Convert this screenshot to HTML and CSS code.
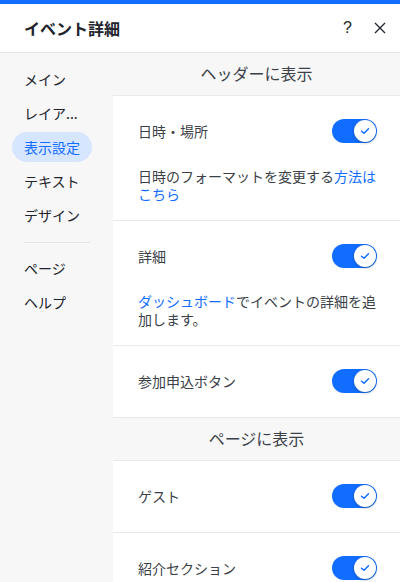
FILE: index.html
```html
<!DOCTYPE html>
<html lang="ja">
<head>
    <meta charset="UTF-8">
    <meta name="viewport" content="width=device-width, initial-scale=1.0">
    <title>イベント詳細</title>
    <link rel="stylesheet" href="styles.css">
</head>
<body>
    <div class="topbar"></div>
    <div class="header">
        <h1 class="title">イベント詳細</h1>
        <span class="help">?</span>
        <span class="close">
            <svg width="12" height="12" viewBox="0 0 12 12"><path d="M1 1L11 11M11 1L1 11" stroke="#20232b" stroke-width="1.3" fill="none"/></svg>
        </span>
    </div>
    <div class="main">
        <div class="sidebar">
            <div class="nav-item">メイン</div>
            <div class="nav-item">レイア...</div>
            <div class="nav-item active">表示設定</div>
            <div class="nav-item">テキスト</div>
            <div class="nav-item">デザイン</div>
            <div class="nav-divider"></div>
            <div class="nav-item">ページ</div>
            <div class="nav-item">ヘルプ</div>
        </div>
        <div class="content">
            <div class="section-title">ヘッダーに表示</div>

            <div class="card">
                <div class="row">
                    <span class="label">日時・場所</span>
                    <span class="toggle"><span class="knob"><svg width="10" height="8" viewBox="0 0 10 8"><path d="M1.5 4.2L4 6.3L8.5 1.8" stroke="#116dff" stroke-width="1.5" fill="none" stroke-linecap="round" stroke-linejoin="round"/></svg></span></span>
                </div>
                <p class="desc">日時のフォーマットを変更する<span class="link">方法はこちら</span></p>
            </div>

            <div class="card">
                <div class="row">
                    <span class="label">詳細</span>
                    <span class="toggle"><span class="knob"><svg width="10" height="8" viewBox="0 0 10 8"><path d="M1.5 4.2L4 6.3L8.5 1.8" stroke="#116dff" stroke-width="1.5" fill="none" stroke-linecap="round" stroke-linejoin="round"/></svg></span></span>
                </div>
                <p class="desc"><span class="link">ダッシュボード</span>でイベントの詳細を追加します。</p>
            </div>

            <div class="card">
                <div class="row">
                    <span class="label">参加申込ボタン</span>
                    <span class="toggle"><span class="knob"><svg width="10" height="8" viewBox="0 0 10 8"><path d="M1.5 4.2L4 6.3L8.5 1.8" stroke="#116dff" stroke-width="1.5" fill="none" stroke-linecap="round" stroke-linejoin="round"/></svg></span></span>
                </div>
            </div>

            <div class="section-title">ページに表示</div>

            <div class="card">
                <div class="row">
                    <span class="label">ゲスト</span>
                    <span class="toggle"><span class="knob"><svg width="10" height="8" viewBox="0 0 10 8"><path d="M1.5 4.2L4 6.3L8.5 1.8" stroke="#116dff" stroke-width="1.5" fill="none" stroke-linecap="round" stroke-linejoin="round"/></svg></span></span>
                </div>
            </div>

            <div class="card">
                <div class="row">
                    <span class="label">紹介セクション</span>
                    <span class="toggle"><span class="knob"><svg width="10" height="8" viewBox="0 0 10 8"><path d="M1.5 4.2L4 6.3L8.5 1.8" stroke="#116dff" stroke-width="1.5" fill="none" stroke-linecap="round" stroke-linejoin="round"/></svg></span></span>
                </div>
            </div>
        </div>
    </div>
</body>
</html>
```

FILE: styles.css
```css
body {
    margin: 0;
    padding: 0;
    width: 400px;
    height: 582px;
    overflow: hidden;
    background-color: #ffffff;
    font-family: "Noto Sans CJK JP", "Noto Sans", sans-serif;
    color: #3b3f48;
}

.topbar {
    height: 4px;
    background-color: #116dff;
}

.header {
    height: 48px;
    display: flex;
    align-items: center;
    padding: 0 14px 0 24px;
    border-bottom: 1px solid #e3e6ea;
}

.title {
    flex: 1;
    margin: 0;
    font-size: 16px;
    font-weight: bold;
    color: #20232b;
}

.help {
    font-family: "Liberation Sans", sans-serif;
    font-size: 16px;
    color: #20232b;
    margin-right: 22px;
}

.close {
    display: flex;
    width: 12px;
    height: 12px;
}

.main {
    display: flex;
    height: 529px;
}

.sidebar {
    width: 113px;
    flex-shrink: 0;
    background-color: #f7f7f8;
    padding-top: 11px;
    box-sizing: border-box;
}

.nav-item {
    width: fit-content;
    height: 30px;
    line-height: 30px;
    margin: 0 0 4px 12px;
    padding: 0 12px;
    border-radius: 15px;
    font-size: 14px;
    color: #20232b;
}

.nav-item.active {
    background-color: #d6e6fe;
    color: #116dff;
}

.nav-divider {
    width: 66px;
    height: 1px;
    background-color: #e1e4e8;
    margin: 12px 0 10px 24px;
}

.content {
    flex: 1;
    overflow: hidden;
}

.section-title {
    height: 42px;
    line-height: 40px;
    text-align: center;
    font-size: 16px;
    color: #3b3f48;
    background-color: #f7f7f8;
    border-bottom: 1px solid #e6e9ed;
}

.card {
    padding: 23px 23px 0 25px;
    border-bottom: 1px solid #e6e9ed;
}

.row {
    display: flex;
    align-items: center;
    justify-content: space-between;
    height: 24px;
    margin-bottom: 24px;
}

.label {
    font-size: 14px;
}

.toggle {
    width: 45px;
    height: 24px;
    border-radius: 12px;
    background-color: #116dff;
    display: flex;
    align-items: center;
    justify-content: flex-end;
    padding-right: 1px;
    box-sizing: border-box;
}

.knob {
    width: 22px;
    height: 22px;
    border-radius: 50%;
    background-color: #ffffff;
    box-shadow: 0 1px 3px rgba(22, 45, 61, 0.35);
    display: flex;
    align-items: center;
    justify-content: center;
}

.desc {
    margin: 0 0 17px;
    font-size: 14px;
    line-height: 18px;
}

.link {
    color: #116dff;
}
```
